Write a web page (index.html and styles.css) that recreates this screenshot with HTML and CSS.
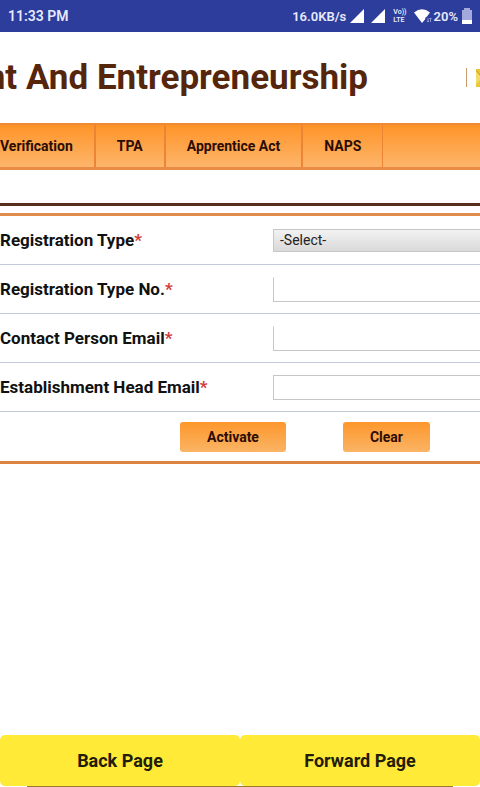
FILE: index.html
```html
<!DOCTYPE html>
<html lang="en">
<head>
  <meta charset="UTF-8">
  <meta name="viewport" content="width=device-width, initial-scale=1.0">
  <title>Establishment Activation</title>
  <link rel="stylesheet" href="styles.css">
</head>
<body>
  <div class="status-bar">
    <span>11:33 PM</span>
    <div class="status-icons">
      <span class="speed">16.0KB/s</span>
      <svg class="signal" width="14" height="14" viewBox="0 0 14 14"><path d="M14 0v14H0z" fill="#fff"/></svg>
      <svg class="signal" width="14" height="14" viewBox="0 0 14 14"><path d="M14 0v14H0z" fill="#fff"/></svg>
      <span class="volte"><span>Vo))</span><span>LTE</span></span>
      <svg class="wifi" width="18" height="14" viewBox="0 0 18 14">
        <path d="M0 3.500Q8 -3 16 3.500L13 7.500Q11 8 11 10.500L8 14z" fill="#fff"/>
        <path d="M14 9v4M13 12l1 1 1-1M16.500 13V9M15.500 10l1-1 1 1" stroke="#a9b1e4" stroke-width="0.800" fill="none"/>
      </svg>
      <span>20%</span>
      <svg class="battery" width="10" height="16" viewBox="0 0 10 16">
        <path d="M2 0h6v2h2v14H0V2h2z" fill="#a3a9dc"/>
        <path d="M0 12h10v4H0z" fill="#fff"/>
      </svg>
    </div>
  </div>

  <header class="header">
    <h1>nt And Entrepreneurship</h1>
    <div class="contact">
      <span class="divider"></span>
      <svg width="4" height="20" viewBox="0 0 4 20">
        <path d="M0 1h4v18H0z" fill="#e9c83c"/>
        <path d="M0 3l4 5v4L0 16z" fill="#f3dc68"/>
        <path d="M0 2l4 5" stroke="#c99a1c" fill="none"/>
      </svg>
    </div>
  </header>

  <nav class="menu">
    <a href="#">Verification</a>
    <a href="#">TPA</a>
    <a href="#">Apprentice Act</a>
    <a href="#">NAPS</a>
  </nav>

  <div class="title-strip"></div>

  <form class="form">
    <div class="row">
      <label for="regType">Registration Type<span class="required">*</span></label>
      <select id="regType">
        <option>-Select-</option>
      </select>
    </div>
    <div class="row">
      <label for="regNo">Registration Type No.<span class="required">*</span></label>
      <input class="no-top" type="text" id="regNo">
    </div>
    <div class="row">
      <label for="contactEmail">Contact Person Email<span class="required">*</span></label>
      <input class="no-top" type="text" id="contactEmail">
    </div>
    <div class="row">
      <label for="headEmail">Establishment Head Email<span class="required">*</span></label>
      <input type="text" id="headEmail">
    </div>
    <div class="buttons">
      <button type="button">Activate</button>
      <button type="reset">Clear</button>
    </div>
  </form>

  <div class="page-nav">
    <button type="button" onclick="history.back()">Back Page</button>
    <button type="button" onclick="history.forward()">Forward Page</button>
  </div>
  <div class="page-end"></div>
</body>
</html>
```
FILE: styles.css
```css
* {
  box-sizing: border-box;
}
body {
  display: flex;
  flex-direction: column;
  min-height: 100vh;
  margin: 0;
  overflow-x: hidden;
  background: #fff;
  font-family: Roboto, sans-serif;
  color: #111;
}

/* Status bar */
.status-bar {
  display: flex;
  justify-content: space-between;
  align-items: center;
  height: 32px;
  padding: 0 8px;
  background: #2d3d9b;
  color: #e6eafc;
  font-size: 14px;
  font-weight: 600;
}
.status-icons {
  display: flex;
  align-items: center;
  font-size: 13px;
}
.signal {
  margin-left: 4px;
  margin-right: 3px;
}
.volte {
  display: flex;
  flex-direction: column;
  margin: 0 7px 0 5px;
  font-size: 7px;
  line-height: 8px;
}
.wifi {
  margin-right: 2px;
}
.battery {
  margin-left: 4px;
}

/* Header */
.header {
  display: flex;
  justify-content: flex-end;
  align-items: center;
  height: 91px;
  overflow: hidden;
}
.header h1 {
  flex: none;
  margin: 0;
  font-size: 35px;
  line-height: 40px;
  font-weight: 700;
  white-space: nowrap;
  color: #55260c;
}
.contact {
  display: flex;
  flex: none;
  justify-content: flex-end;
  align-items: center;
  gap: 9px;
  width: 112px;
}
.divider {
  width: 1px;
  height: 19px;
  background: #c89a6c;
}

/* Menu */
.menu {
  display: flex;
  height: 47px;
  border-top: 2px solid #f08a35;
  border-bottom: 3px solid #e88b45;
  background: linear-gradient(#ff9429, #fdb56a);
}
.menu a {
  display: flex;
  align-items: center;
  padding: 0 21px;
  border-right: 2px solid #ec8436;
  color: #2b0d05;
  font-size: 14px;
  font-weight: 700;
  text-decoration: none;
  white-space: nowrap;
}
.menu a:first-child {
  padding-left: 0;
}
.menu a:last-child {
  border-right-width: 1px;
}

.title-strip {
  height: 36px;
  border-bottom: 3px solid #57301a;
}

/* Form */
.form {
  margin-top: 7px;
  border-top: 3px solid #e08c4e;
  border-bottom: 3px solid #dc8440;
}
.row {
  display: flex;
  align-items: center;
  height: 49px;
  border-bottom: 1px solid #c3cada;
}
.row label {
  flex: none;
  width: 273px;
  font-size: 17px;
  line-height: 20px;
  font-weight: 700;
  white-space: nowrap;
}
.required {
  color: #d43a3a;
}
.row input,
.row select {
  flex: 1;
  min-width: 0;
  height: 25px;
  padding: 0 6px;
  border: 1px solid #c6c6cb;
  border-right: 0;
  border-radius: 0;
  background: #fff;
  color: #222;
  font-family: inherit;
  font-size: 14px;
}
.row select {
  height: 23px;
  appearance: none;
  background: linear-gradient(#f2f2f2, #d9d9d9);
}
.row .no-top {
  border-top-color: transparent;
}
.buttons {
  display: flex;
  justify-content: center;
  align-items: center;
  gap: 57px;
  height: 49px;
  padding-left: 130px;
}
.buttons button {
  height: 30px;
  padding: 0 27px;
  border: 0;
  border-radius: 3px;
  background: linear-gradient(#fd972c, #fbb465);
  color: #2b0d05;
  font-family: inherit;
  font-size: 14px;
  font-weight: 700;
}

/* Page navigation */
.page-nav {
  display: flex;
  margin-top: auto;
}
.page-nav button {
  flex: 1;
  height: 51px;
  border: 0;
  border-radius: 5px;
  background: #ffea37;
  color: #221c08;
  font-family: inherit;
  font-size: 18px;
  font-weight: 700;
}
.page-end {
  height: 1px;
  margin: 0 27px;
  background: #9a7a2c;
}
```
